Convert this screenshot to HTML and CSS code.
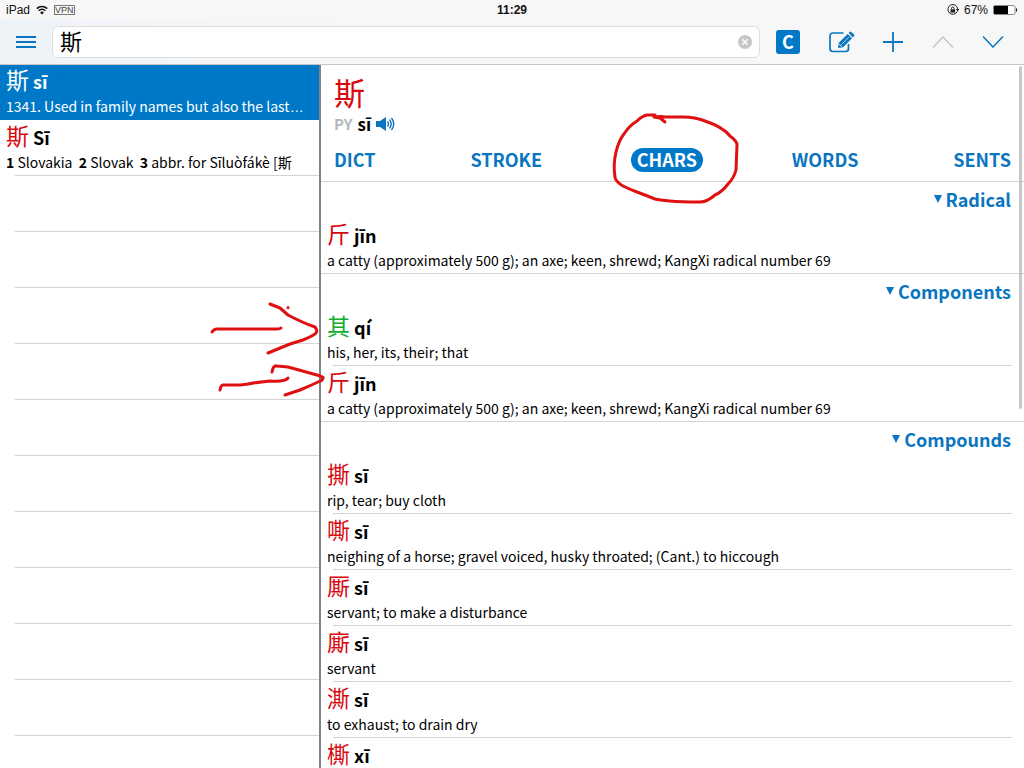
FILE: index.html
```html
<!DOCTYPE html>
<html lang="en">
<head>
	<meta charset="utf-8">
	<meta name="viewport" content="width=device-width, initial-scale=1">
	<title>斯 sī</title>
	<link rel="stylesheet" href="styles.css">
</head>
<body>
	<header class="top">
		<div class="status">
			<div class="statusL">
				<span>iPad</span>
				<svg width="14" height="10" viewBox="0 0 12 10"><path d="M.8 3.6a7.4 7.4 0 0 1 10.4 0M2.7 5.7a4.7 4.7 0 0 1 6.6 0" fill="none" stroke="#111" stroke-width="1.600"/><path d="M6 9.6 4.1 7.5a2.7 2.7 0 0 1 3.8 0z" fill="#111"/></svg>
				<span class="vpn">VPN</span>
			</div>
			<b class="clock">11:29</b>
			<div class="statusR">
				<svg width="12" height="12" viewBox="0 0 12 12"><path d="M10.3 7.4A4.9 4.9 0 1 1 10.7 5" fill="none" stroke="#222"/><path d="M9 5h3.200L10.600 7.500z" fill="#222"/><rect x="3.500" y="5.300" width="4.600" height="3.300" fill="#222"/><path d="M4.500 5.500V4.300a1.300 1.300 0 0 1 2.600 0v1.200" fill="none" stroke="#222"/></svg>
				<span>67%</span>
				<svg width="25" height="10" viewBox="0 0 25 10"><rect x=".5" y=".5" width="21.500" height="9" rx="1.500" fill="#fff" stroke="#888"/><path d="M1 1h14v8H1z"/><path d="M23 3c1.600.4 1.600 3.600 0 4z" fill="#222"/></svg>
			</div>
		</div>
		<div class="bar">
			<button class="ico menu" aria-label="Menu"><svg width="20" height="14" viewBox="0 0 20 14"><path d="M0 2h20M0 7h20M0 12h20" stroke="#0a75c0" stroke-width="2"/></svg></button>
			<div class="search">
				<input type="text" id="q" aria-label="Search" value="斯">
				<button class="ico" aria-label="Clear"><svg width="14" height="14" viewBox="0 0 14 14"><circle cx="7" cy="7" r="7" fill="#c7c7c9"/><path d="m4.300 4.300 5.400 5.400m0-5.400L4.300 9.700" stroke="#fff" stroke-width="1.400"/></svg></button>
			</div>
			<div class="tools">
				<button class="ico cBtn" aria-label="Chinese">C</button>
				<button class="ico" aria-label="Edit"><svg width="26" height="22" viewBox="0 0 26 22"><path d="M14.500 2H4a3 3 0 0 0-3 3v12.500a3 3 0 0 0 3 3h12.500a3 3 0 0 0 3-3V13" fill="none" stroke="#0a75c0" stroke-width="1.700"/><path d="m9 17 .8-5.200L18.700 3l4.300 4.300-8.900 8.900zM19.600 2.100l1.100-1.100q.8-.8 1.700 0l2.600 2.600q.8.900 0 1.700l-1.100 1.100z" fill="#0a75c0"/><path d="m12.500 13.500 7.500-7.500" stroke="#f7f7f7" stroke-width=".7"/><path d="m10.200 13 2.600 2.700" stroke="#f7f7f7"/></svg></button>
				<button class="ico" aria-label="Add"><svg width="20" height="20" viewBox="0 0 20 20"><path d="M0 10h20M10 0v20" stroke="#0a75c0" stroke-width="1.800"/></svg></button>
				<button class="ico" aria-label="Previous" disabled><svg width="22" height="12" viewBox="0 0 22 12"><path d="M1 11.500 11 1l10 10.500" fill="none" stroke="#c4c4c6" stroke-width="1.300"/></svg></button>
				<button class="ico" aria-label="Next"><svg width="22" height="12" viewBox="0 0 22 12"><path d="M1 .5 11 11 21 .5" fill="none" stroke="#0a75c0" stroke-width="1.500"/></svg></button>
			</div>
		</div>
	</header>

	<main class="panes">
		<nav class="list">
			<a href="#" class="row on"><div class="hw"><span class="hz">斯</span> <b>sī</b></div><div class="def">1341. Used in family names but also the last<span class="dots">…</span></div></a>
			<a href="#" class="row"><div class="hw"><span class="hz">斯</span> <b>Sī</b></div><div class="def"><b>1</b> Slovakia&nbsp; <b>2</b> Slovak&nbsp; <b>3</b> abbr. for Sīluòfákè [斯</div></a>
			<div class="row"></div>
			<div class="row"></div>
			<div class="row"></div>
			<div class="row"></div>
			<div class="row"></div>
			<div class="row"></div>
			<div class="row"></div>
			<div class="row"></div>
			<div class="row"></div>
			<div class="row"></div>
			<div class="row"></div>
		</nav>

		<article class="entry">
			<div class="head">
				<h1>斯</h1>
				<div class="py"><span>PY</span> <b>sī</b>
					<button class="ico" aria-label="Play"><svg width="19" height="14" viewBox="0 0 19 14"><path d="M0 4h4l6-4v14l-6-4H0z" fill="#0a75c0"/><path d="M11.500 4.500q2 2.500 0 5M13.500 2.500q3.500 4.500 0 9M15.500.8q4.500 6.200 0 12.400" fill="none" stroke="#0a75c0" stroke-width="1.400"/></svg></button>
				</div>
				<div class="tabs">
					<button>DICT</button>
					<button>STROKE</button>
					<button class="on">CHARS</button>
					<button>WORDS</button>
					<button>SENTS</button>
				</div>
			</div>

			<section>
				<button class="sec"><i></i>Radical</button>
				<a href="#" class="row"><div class="hw"><span class="hz">斤</span> <b>jīn</b></div><div class="def">a catty (approximately 500 g); an axe; keen, shrewd; KangXi radical number 69</div></a>
			</section>
			<section>
				<button class="sec"><i></i>Components</button>
				<a href="#" class="row"><div class="hw"><span class="hz t2">其</span> <b>qí</b></div><div class="def">his, her, its, their; that</div></a>
				<a href="#" class="row"><div class="hw"><span class="hz">斤</span> <b>jīn</b></div><div class="def">a catty (approximately 500 g); an axe; keen, shrewd; KangXi radical number 69</div></a>
			</section>
			<section>
				<button class="sec"><i></i>Compounds</button>
				<a href="#" class="row"><div class="hw"><span class="hz">撕</span> <b>sī</b></div><div class="def">rip, tear; buy cloth</div></a>
				<a href="#" class="row"><div class="hw"><span class="hz">嘶</span> <b>sī</b></div><div class="def">neighing of a horse; gravel voiced, husky throated; (Cant.) to hiccough</div></a>
				<a href="#" class="row"><div class="hw"><span class="hz">厮</span> <b>sī</b></div><div class="def">servant; to make a disturbance</div></a>
				<a href="#" class="row"><div class="hw"><span class="hz">廝</span> <b>sī</b></div><div class="def">servant</div></a>
				<a href="#" class="row"><div class="hw"><span class="hz">澌</span> <b>sī</b></div><div class="def">to exhaust; to drain dry</div></a>
				<a href="#" class="row"><div class="hw"><span class="hz">&#x3BD5;</span> <b>xī</b></div></a>
			</section>
			<div class="thumb"></div>
		</article>
	</main>

	<!-- hand drawn marks -->
	<svg class="marks" width="1024" height="768" viewBox="0 0 1024 768">
		<path d="M654 117 660 118l5 4M654 117q8-1 11 0h18q12 0 22 4 18 6 25 15 7 5 7 9l-1 25q-2 8-8 14-6 8-13 11-8 7-15 7-20 0-30-1-11-1-15-2-10-4-18-7-8-3-14-6-8-5-8-9-2-12 1-25 3-12 8-18 5-8 13-13 5-5 10-6h8"/>
		<path d="M212 332q2-3 5-3h60q3 0 4-1M270 304l10 4 8 7q15 8 27 12 3 4 1 6-3 3-13 7l-13 4-22 9M288 307.500v.2"/>
		<path d="M220 390q1-5 3-5h17q10-1 13-2l17-2q15 1 18-3M272 372q1-7 5-6l11 1 29 8q7 2 6 3-1 3-3 3-10 5-20 9l-15 5"/>
	</svg>
</body>
</html>
```
FILE: styles.css
```css
*{
	box-sizing: border-box;
}
html,body{
	height: 100%;
}
body{
	margin: 0;
	display: flex;
	flex-direction: column;
	position: relative;
	overflow: hidden;
	background: #fff;
	color: #000;
	font-family: "Noto Sans CJK SC", "Noto Sans", sans-serif;
	font-size: 15px;
}
button{
	font: inherit;
	border: none;
	background: none;
	padding: 0;
	color: #0a75c0;
}
a{
	color: inherit;
	text-decoration: none;
}
svg{
	display: block;
}

/* top bar */
.top{
	background: linear-gradient(to right, #eef3f8, #f7f7f7 340px);
	box-shadow: 0 1px 0 #c4c6c8;
	z-index: 1;
}
.status{
	display: grid;
	grid-template-columns: 1fr auto 1fr;
	align-items: center;
	height: 20px;
	padding: 0 6px;
	background: #f7f7f7;
	font-family: "Liberation Sans", sans-serif;
	font-size: 12px;
	color: #111;
}
.statusL,.statusR{
	display: flex;
	align-items: center;
	gap: 5px;
}
.statusR{
	justify-content: flex-end;
}
.vpn{
	border: 1px solid #777;
	font-size: 9px;
	line-height: 8px;
	color: #444;
}
.bar{
	display: flex;
	align-items: center;
	height: 44px;
	padding: 0 20px 0 16px;
}
.ico{
	display: flex;
	align-items: center;
	justify-content: center;
}
.menu{
	width: 20px;
	margin-right: 16px;
}
.search{
	flex: 1;
	display: flex;
	align-items: center;
	height: 32px;
	padding: 0 7px;
	background: #fff;
	border: 1px solid #dcdee0;
	border-radius: 6px;
}
.search input{
	flex: 1;
	min-width: 0;
	height: 30px;
	padding: 0 0 4px;
	border: none;
	outline: none;
	background: none;
	font: inherit;
	font-size: 22px;
}
.tools{
	display: flex;
	align-items: center;
	justify-content: space-between;
	width: 228px;
	margin-left: 16px;
}
.cBtn{
	width: 24px;
	height: 24px;
	padding-bottom: 2px;
	border-radius: 3px;
	background: #0078c8;
	color: #fff;
	font-size: 18px;
	line-height: 22px;
	font-weight: bold;
}

/* two panes */
.panes{
	flex: 1;
	min-height: 0;
	display: flex;
}
.list{
	flex: 0 0 321px;
	border-right: 2px solid #808285;
	overflow: hidden;
}
.row{
	display: grid;
	grid-template-rows: 30px 25px 1px;
	padding-left: 6px;
}
.row:after{
	content: "";
	grid-row: 3;
	margin-left: 9px;
	background: #d2d3d5;
}
.hw{
	line-height: 30px;
	font-size: 18px;
	white-space: nowrap;
}
.hz{
	font-size: 23px;
	line-height: 30px;
	color: #d8080c;
}
.t2{
	color: #0fae2c;
}
.def{
	font-size: 14px;
	line-height: 24px;
	white-space: nowrap;
	overflow: hidden;
}
.dots{
	font-family: "Liberation Sans", sans-serif;
}
.list .on,.list .on .hz{
	color: #fff;
}
.list .on{
	background: #0078c8;
}
.list .on:after{
	background: #0078c8;
}

.entry{
	flex: 1;
	min-width: 0;
	position: relative;
	overflow: hidden;
}
.head{
	height: 118px;
	padding: 8px 7px 0;
	border-bottom: 1px solid #d2d3d5;
}
h1{
	margin: 0 6px;
	font-size: 31px;
	line-height: 40px;
	font-weight: normal;
	color: #d8080c;
}
.py{
	display: flex;
	align-items: center;
	gap: 5px;
	height: 24px;
	margin: 0 6px;
	line-height: 24px;
}
.py span{
	color: #b4b6b8;
	font-weight: bold;
}
.py b{
	font-size: 17px;
}
.tabs{
	display: flex;
	justify-content: space-between;
	margin-top: 12px;
}
.tabs button{
	height: 24px;
	padding: 0 6px;
	border-radius: 12px;
	font-size: 18px;
	line-height: 22px;
	padding-bottom: 2px;
	font-weight: bold;
}
.tabs .on{
	background: #0078c8;
	color: #fff;
}
.sec{
	display: flex;
	align-items: center;
	justify-content: flex-end;
	gap: 4px;
	width: 100%;
	height: 36px;
	padding: 0 13px 2px 0;
	font-size: 18px;
	line-height: 34px;
	font-weight: bold;
}
.sec i{
	border: 4px solid transparent;
	border-top: 8px solid #0a75c0;
	border-bottom: none;
}
.entry .row:after{
	margin: 0 12px 0 6px;
}
.entry .row:last-child:after{
	margin: 0 0 0 -6px;
}
.thumb{
	position: absolute;
	top: 2px;
	right: 2px;
	width: 3px;
	height: 343px;
	border-radius: 2px;
	background: #c6c7c9;
}
.marks{
	position: absolute;
	top: 0;
	left: 0;
	z-index: 2;
	pointer-events: none;
	fill: none;
	stroke: #e01010;
	stroke-width: 3px;
	stroke-linecap: round;
	stroke-linejoin: round;
}
```
